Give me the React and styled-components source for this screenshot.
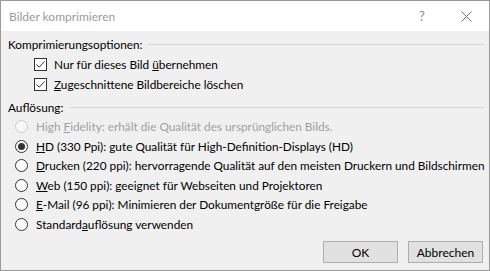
import React from 'react';
import styled, { createGlobalStyle } from 'styled-components';

const GlobalStyle = createGlobalStyle`
  html, body {
    margin: 0;
    padding: 0;
    background: #ffffff;
  }
  body {
    font-family: "Segoe UI", Lato, "Noto Sans", sans-serif;
    font-size: 11.8px;
    color: #000;
  }
`;

const Check = () => (
  <svg width="11" height="11" viewBox="0 0 11 11">
    <path d="M1.5 5.5 L4.2 8.2 L9.5 2.5" fill="none" stroke="#333" strokeWidth="1" />
  </svg>
);

const CloseIcon = () => (
  <svg width="11" height="11" viewBox="0 0 11 11">
    <path d="M0.5 0.5 L10.5 10.5 M10.5 0.5 L0.5 10.5" stroke="#707070" strokeWidth="1" />
  </svg>
);

const Window = styled.div`
  width: 490px;
  height: 271px;
  box-sizing: border-box;
  border: 1px solid #9a9a9a;
  display: flex;
  flex-direction: column;
  background: #f0f0f0;
  overflow: hidden;
`;

const TitleBar = styled.div`
  height: 30px;
  flex: none;
  background: #ffffff;
  display: flex;
  align-items: center;
  justify-content: space-between;
  padding-left: 8px;
`;

const Title = styled.span`
  color: #9b9b9b;
  font-size: 12px;
  margin-top: 1px;
`;

const TitleButtons = styled.div`
  display: flex;
  align-items: center;
`;

const HelpButton = styled.span`
  width: 40px;
  text-align: center;
  color: #8a8a8a;
  font-size: 13px;
  margin-right: 1px;
`;

const CloseButton = styled.span`
  width: 46px;
  display: flex;
  justify-content: center;
  margin-top: 1px;
`;

const Body = styled.div`
  flex: 1;
  display: flex;
  flex-direction: column;
  padding: 4px 5px 0 7px;
`;

const GroupHead = styled.div`
  height: 18px;
  display: flex;
  align-items: center;
  margin-top: ${({ $gap }) => ($gap ? '4px' : '0')};
  margin-bottom: 1px;
  white-space: nowrap;
`;

const Rule = styled.div`
  flex: 1;
  height: 1px;
  background: #d5d5d5;
  margin-left: 6px;
  margin-top: 1px;
`;

const CheckRow = styled.div`
  height: 20px;
  display: flex;
  align-items: center;
  padding-left: 26px;
  gap: 7px;
  white-space: nowrap;
`;

const CheckBox = styled.span`
  width: 13px;
  height: 13px;
  box-sizing: border-box;
  border: 1px solid #333333;
  background: #ffffff;
  display: flex;
  align-items: center;
  justify-content: center;
  flex: none;
`;

const RadioRow = styled.div`
  height: 19.5px;
  display: flex;
  align-items: center;
  padding-left: 7px;
  gap: 8px;
  white-space: nowrap;
  color: ${({ $disabled }) => ($disabled ? '#a0a0a0' : '#000')};
`;

const Radio = styled.span`
  width: 13px;
  height: 13px;
  box-sizing: border-box;
  border-radius: 50%;
  border: 1px solid ${({ $disabled }) => ($disabled ? '#cccccc' : '#333333')};
  background: ${({ $disabled }) => ($disabled ? '#f8f8f8' : '#ffffff')};
  display: flex;
  align-items: center;
  justify-content: center;
  flex: none;
  &::after {
    content: '';
    display: ${({ $checked }) => ($checked ? 'block' : 'none')};
    width: 7px;
    height: 7px;
    border-radius: 50%;
    background: #333333;
  }
`;

const Footer = styled.div`
  display: flex;
  justify-content: flex-end;
  gap: 10px;
  margin-top: auto;
  margin-bottom: 7px;
  padding-right: 1px;
`;

const Button = styled.button`
  width: 75px;
  height: 22px;
  box-sizing: border-box;
  border: 1px solid #adadad;
  background: #e1e1e1;
  font-family: inherit;
  font-size: 12px;
  color: #000;
  padding: 0;
`;

const App = () => {
  return (
    <>
      <GlobalStyle />
      <Window>
        <TitleBar>
          <Title>Bilder komprimieren</Title>
          <TitleButtons>
            <HelpButton>?</HelpButton>
            <CloseButton><CloseIcon /></CloseButton>
          </TitleButtons>
        </TitleBar>
        <Body>
          <GroupHead>
            <span>Komprimierungsoptionen:</span>
            <Rule />
          </GroupHead>
          <CheckRow>
            <CheckBox><Check /></CheckBox>
            <span>Nur für dieses Bild <u>ü</u>bernehmen</span>
          </CheckRow>
          <CheckRow>
            <CheckBox><Check /></CheckBox>
            <span><u>Z</u>ugeschnittene Bildbereiche löschen</span>
          </CheckRow>
          <GroupHead $gap>
            <span>Auflösung:</span>
            <Rule />
          </GroupHead>
          <RadioRow $disabled>
            <Radio $disabled />
            <span>High <u>F</u>idelity: erhält die Qualität des ursprünglichen Bilds.</span>
          </RadioRow>
          <RadioRow>
            <Radio $checked />
            <span><u>H</u>D (330 Ppi): gute Qualität für High-Definition-Displays (HD)</span>
          </RadioRow>
          <RadioRow>
            <Radio />
            <span><u>D</u>rucken (220 ppi): hervorragende Qualität auf den meisten Druckern und Bildschirmen</span>
          </RadioRow>
          <RadioRow>
            <Radio />
            <span><u>W</u>eb (150 ppi): geeignet für Webseiten und Projektoren</span>
          </RadioRow>
          <RadioRow>
            <Radio />
            <span><u>E</u>-Mail (96 ppi): Minimieren der Dokumentgröße für die Freigabe</span>
          </RadioRow>
          <RadioRow>
            <Radio />
            <span>Standard<u>a</u>uflösung verwenden</span>
          </RadioRow>
          <Footer>
            <Button>OK</Button>
            <Button>Abbrechen</Button>
          </Footer>
        </Body>
      </Window>
    </>
  );
};

export default App;
